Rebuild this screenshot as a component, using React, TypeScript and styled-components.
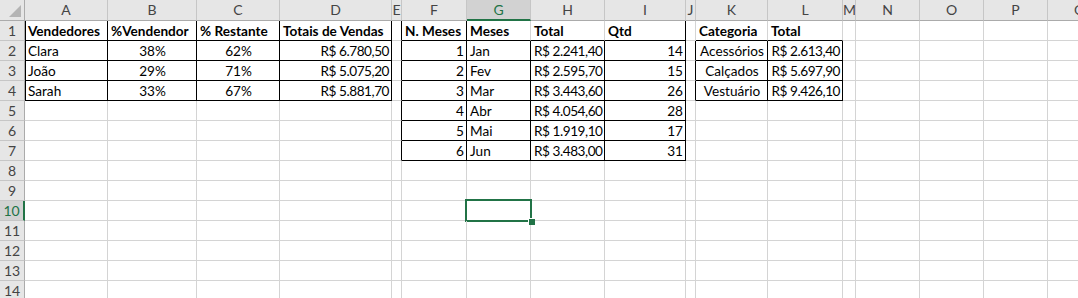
import React from 'react';
import styled, { createGlobalStyle, css } from 'styled-components';

const GlobalStyle = createGlobalStyle`
  html, body { margin: 0; padding: 0; background: #fff; overflow: hidden; }
  body { font-family: Lato, "Open Sans", sans-serif; }
`;

const GREEN = '#217346';
const GRID = '#d4d4d4';

const COLS = [
  { name: 'A', w: 83 },
  { name: 'B', w: 89 },
  { name: 'C', w: 83 },
  { name: 'D', w: 112 },
  { name: 'E', w: 10 },
  { name: 'F', w: 65 },
  { name: 'G', w: 64 },
  { name: 'H', w: 74 },
  { name: 'I', w: 81 },
  { name: 'J', w: 10 },
  { name: 'K', w: 72 },
  { name: 'L', w: 75 },
  { name: 'M', w: 13 },
  { name: 'N', w: 64 },
  { name: 'O', w: 64 },
  { name: 'P', w: 64 },
  { name: 'Q', w: 64 },
];
const ROWS = 14;
const ACTIVE = { col: 'G', row: 10 };

type Align = 'l' | 'c' | 'r';
interface CellData {
  v: string;
  a?: Align;
  b?: boolean;
}

const cells: Record<string, CellData> = {
  A1: { v: 'Vendedores', b: true },
  B1: { v: '%Vendendor', b: true },
  C1: { v: '% Restante', b: true },
  D1: { v: 'Totais de Vendas', b: true },
  A2: { v: 'Clara' },
  B2: { v: '38%', a: 'c' },
  C2: { v: '62%', a: 'c' },
  D2: { v: 'R$ 6.780,50', a: 'r' },
  A3: { v: 'João' },
  B3: { v: '29%', a: 'c' },
  C3: { v: '71%', a: 'c' },
  D3: { v: 'R$ 5.075,20', a: 'r' },
  A4: { v: 'Sarah' },
  B4: { v: '33%', a: 'c' },
  C4: { v: '67%', a: 'c' },
  D4: { v: 'R$ 5.881,70', a: 'r' },

  F1: { v: 'N. Meses', b: true },
  G1: { v: 'Meses', b: true },
  H1: { v: 'Total', b: true },
  I1: { v: 'Qtd', b: true },

  K1: { v: 'Categoria', b: true },
  L1: { v: 'Total', b: true },
  K2: { v: 'Acessórios', a: 'c' },
  L2: { v: 'R$ 2.613,40', a: 'r' },
  K3: { v: 'Calçados', a: 'c' },
  L3: { v: 'R$ 5.697,90', a: 'r' },
  K4: { v: 'Vestuário', a: 'c' },
  L4: { v: 'R$ 9.426,10', a: 'r' },
};

const months = [
  ['Jan', 'R$ 2.241,40', '14'],
  ['Fev', 'R$ 2.595,70', '15'],
  ['Mar', 'R$ 3.443,60', '26'],
  ['Abr', 'R$ 4.054,60', '28'],
  ['Mai', 'R$ 1.919,10', '17'],
  ['Jun', 'R$ 3.483,00', '31'],
];
months.forEach(([m, total, qtd], i) => {
  const r = i + 2;
  cells[`F${r}`] = { v: String(i + 1), a: 'r' };
  cells[`G${r}`] = { v: m };
  cells[`H${r}`] = { v: total, a: 'r' };
  cells[`I${r}`] = { v: qtd, a: 'r' };
});

// black borders: right / bottom / left per cell
const edges: Record<string, { r?: boolean; b?: boolean; l?: boolean }> = {};
const colIdx = (n: string) => COLS.findIndex((c) => c.name === n);
const mark = (key: string, side: 'r' | 'b' | 'l') => {
  edges[key] = { ...(edges[key] || {}), [side]: true };
};
const box = (c1: string, r1: number, c2: string, r2: number, top: boolean) => {
  const a = colIdx(c1);
  const z = colIdx(c2);
  for (let r = r1; r <= r2; r++) {
    for (let c = a; c <= z; c++) {
      const key = `${COLS[c].name}${r}`;
      mark(key, 'r');
      mark(key, 'b');
      if (c === a) {
        if (c === 0) mark(key, 'l');
        else mark(`${COLS[c - 1].name}${r}`, 'r');
      }
      if (top && r === r1 && r > 1) mark(`${COLS[c].name}${r - 1}`, 'b');
    }
  }
};
box('A', 1, 'D', 4, false);
box('F', 1, 'I', 7, false);
box('K', 2, 'L', 4, true);
// inner header separators of the months table are plain gridlines
edges.G1 = { b: true };
edges.H1 = { b: true };

const Sheet = styled.div`
  display: grid;
  grid-template-columns: 25px ${COLS.map((c) => `${c.w}px`).join(' ')};
  grid-template-rows: 21px repeat(${ROWS}, 20px);
  width: 1078px;
  height: 298px;
  overflow: hidden;
  font-size: 13.6px;
  color: #000;
`;

const Corner = styled.div`
  background: #e6e6e6;
  border-right: 1px solid #ababab;
  border-bottom: 1px solid #ababab;
  box-sizing: border-box;
  display: flex;
  align-items: flex-end;
  justify-content: flex-end;
  padding: 0 3px 3px 0;
`;

const ColHead = styled.div<{ $active?: boolean }>`
  box-sizing: border-box;
  background: ${(p) => (p.$active ? '#d2d2d2' : '#e6e6e6')};
  color: ${(p) => (p.$active ? GREEN : '#444')};
  border-right: 1px solid #c6c6c6;
  border-bottom: ${(p) => (p.$active ? `2px solid ${GREEN}` : '1px solid #ababab')};
  text-align: center;
  line-height: 20px;
  font-size: 14px;
  overflow: hidden;
  white-space: nowrap;
`;

const RowHead = styled.div<{ $active?: boolean }>`
  box-sizing: border-box;
  background: ${(p) => (p.$active ? '#d2d2d2' : '#e6e6e6')};
  color: ${(p) => (p.$active ? GREEN : '#444')};
  border-right: ${(p) => (p.$active ? `2px solid ${GREEN}` : '1px solid #ababab')};
  border-bottom: 1px solid #c6c6c6;
  text-align: center;
  line-height: 20px;
  font-size: 14px;
`;

const Cell = styled.div<{
  $align: Align;
  $bold?: boolean;
  $right?: boolean;
  $bottom?: boolean;
  $left?: boolean;
  $selected?: boolean;
  $tight?: boolean;
}>`
  position: relative;
  box-sizing: border-box;
  border-right: 1px solid ${(p) => (p.$right ? '#000' : GRID)};
  border-bottom: 1px solid ${(p) => (p.$bottom ? '#000' : GRID)};
  ${(p) => p.$left && css`box-shadow: inset 1px 0 0 #000;`}
  padding: 1px 2px 0 3px;
  line-height: 19px;
  white-space: nowrap;
  overflow: visible;
  letter-spacing: ${(p) => (p.$tight ? '-0.45px' : 'normal')};
  font-weight: ${(p) => (p.$bold ? 700 : 400)};
  text-align: ${(p) => (p.$align === 'c' ? 'center' : p.$align === 'r' ? 'right' : 'left')};
  ${(p) =>
    p.$selected &&
    css`
      &::after {
        content: '';
        position: absolute;
        left: -2px;
        top: -2px;
        right: -2px;
        bottom: -2px;
        border: 2px solid ${GREEN};
        pointer-events: none;
      }
    `}
`;

const FillHandle = styled.span`
  position: absolute;
  right: -5px;
  bottom: -5px;
  width: 6px;
  height: 6px;
  background: ${GREEN};
  border: 1px solid #fff;
  border-right: none;
  border-bottom: none;
  z-index: 2;
`;

const App = () => {
  const rows = Array.from({ length: ROWS }, (_, i) => i + 1);
  return (
    <>
      <GlobalStyle />
      <Sheet>
        <Corner>
          <svg width="12" height="12" viewBox="0 0 12 12">
            <polygon points="12,0 12,12 0,12" fill="#b4b4b4" />
          </svg>
        </Corner>
        {COLS.map((c) => (
          <ColHead key={c.name} $active={c.name === ACTIVE.col}>
            {c.name}
          </ColHead>
        ))}
        {rows.map((r) => (
          <React.Fragment key={r}>
            <RowHead $active={r === ACTIVE.row}>{r}</RowHead>
            {COLS.map((c) => {
              const key = `${c.name}${r}`;
              const d = cells[key];
              const e = edges[key] || {};
              const selected = c.name === ACTIVE.col && r === ACTIVE.row;
              return (
                <Cell
                  key={key}
                  $align={d?.a || 'l'}
                  $bold={d?.b}
                  $right={e.r}
                  $bottom={e.b}
                  $left={e.l}
                  $selected={selected}
                  $tight={d?.v.startsWith('R$')}
                >
                  {d?.v}
                  {selected && <FillHandle />}
                </Cell>
              );
            })}
          </React.Fragment>
        ))}
      </Sheet>
    </>
  );
};

export default App;
